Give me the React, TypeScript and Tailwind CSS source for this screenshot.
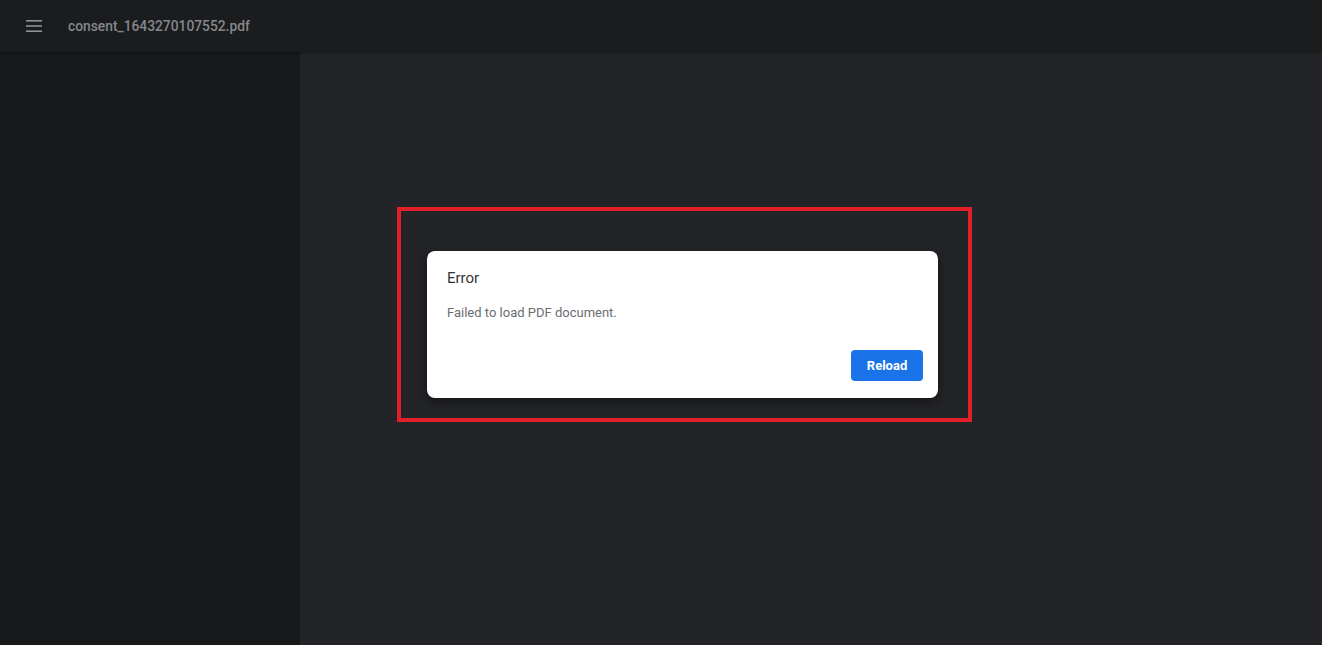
export default function App() {
  return (
    <div className="h-[645px] w-[1322px] flex flex-col bg-[#232427] overflow-hidden font-['Roboto',sans-serif]">
      {/* Toolbar */}
      <header className="h-[52px] shrink-0 flex items-center bg-[#1b1c1e] shadow-[0_1px_3px_rgba(0,0,0,0.35)] z-10">
        <div className="w-[68px] flex items-center pl-[26px]">
          <svg width="16" height="12" viewBox="0 0 16 12" fill="#8e9196">
            <rect x="0" y="0" width="16" height="1.6" />
            <rect x="0" y="5.2" width="16" height="1.6" />
            <rect x="0" y="10.4" width="16" height="1.6" />
          </svg>
        </div>
        <span className="text-[13.8px] font-medium text-[#85878b]">consent_1643270107552.pdf</span>
      </header>

      <div className="flex flex-1">
        {/* Sidebar */}
        <aside className="w-[300px] shrink-0 bg-[#18191b]" />

        {/* Viewer */}
        <main className="flex-1 pl-[97px] pt-[155px]">
          <div className="w-[575px] h-[215px] border-4 border-[#e1202a] pl-[26px] pt-[40px]">
            <div className="w-[511px] h-[147px] bg-white rounded-[8px] shadow-[0_4px_12px_rgba(0,0,0,0.45)] flex flex-col px-5 pt-[17px] pb-[17px]">
              <h2 className="text-[15px] text-[#333438] leading-5">Error</h2>
              <p className="mt-[15px] text-[13px] text-[#6b6d71] leading-5">Failed to load PDF document.</p>
              <div className="mt-auto flex justify-end -mr-[5px]">
                <button className="h-[31px] w-[72px] rounded-[4px] bg-[#1a73e8] text-white text-[13px] font-bold">
                  Reload
                </button>
              </div>
            </div>
          </div>
        </main>
      </div>
    </div>
  );
}
